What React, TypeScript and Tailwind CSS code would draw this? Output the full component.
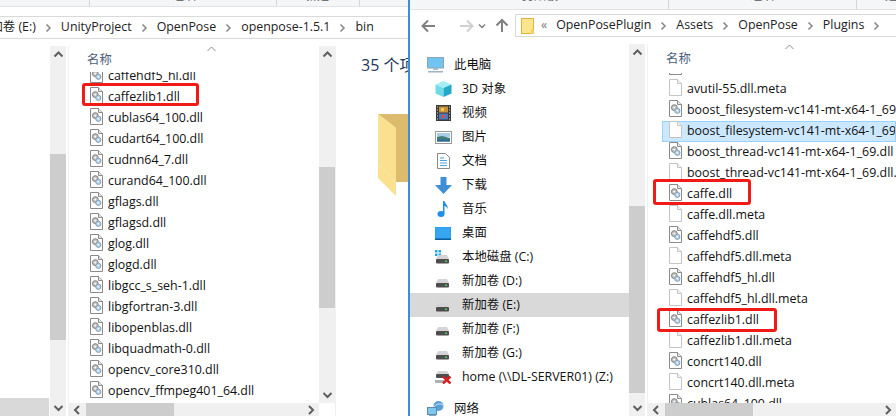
const font = "font-['Open_Sans','Noto_Sans_CJK_SC',sans-serif]";

const leftFiles: [string, boolean][] = [
  ["caffehdf5_hl.dll", true],
  ["caffezlib1.dll", true],
  ["cublas64_100.dll", true],
  ["cudart64_100.dll", true],
  ["cudnn64_7.dll", true],
  ["curand64_100.dll", true],
  ["gflags.dll", true],
  ["gflagsd.dll", true],
  ["glog.dll", true],
  ["glogd.dll", true],
  ["libgcc_s_seh-1.dll", true],
  ["libgfortran-3.dll", true],
  ["libopenblas.dll", true],
  ["libquadmath-0.dll", true],
  ["opencv_core310.dll", true],
  ["opencv_ffmpeg401_64.dll", true],
];

const rightFiles: [string, boolean][] = [
  ["avutil-55.dll", true],
  ["avutil-55.dll.meta", false],
  ["boost_filesystem-vc141-mt-x64-1_69.dll", true],
  ["boost_filesystem-vc141-mt-x64-1_69.dll.meta", false],
  ["boost_thread-vc141-mt-x64-1_69.dll", true],
  ["boost_thread-vc141-mt-x64-1_69.dll.meta", false],
  ["caffe.dll", true],
  ["caffe.dll.meta", false],
  ["caffehdf5.dll", true],
  ["caffehdf5.dll.meta", false],
  ["caffehdf5_hl.dll", true],
  ["caffehdf5_hl.dll.meta", false],
  ["caffezlib1.dll", true],
  ["caffezlib1.dll.meta", false],
  ["concrt140.dll", true],
  ["concrt140.dll.meta", false],
  ["cublas64_100.dll", true],
];

function Chevron({ dir }: { dir: "up" | "down" | "left" | "right" }) {
  const d = {
    up: "M1.5 6.5 L5.5 2.5 L9.5 6.5",
    down: "M1.5 3 L5.5 7 L9.5 3",
    left: "M7 1 L3 5 L7 9",
    right: "M4 1 L8 5 L4 9",
  }[dir];
  return (
    <svg width="11" height="10" viewBox="0 0 11 10" fill="none">
      <path d={d} stroke="#5f5f5f" strokeWidth="2" />
    </svg>
  );
}

function VScroll({ before, thumb, className }: { before: number; thumb: number; className: string }) {
  return (
    <div className={`w-[16px] shrink-0 flex flex-col bg-[#f0f0f0] ${className}`}>
      <div className="h-[17px] shrink-0 flex items-center justify-center">
        <Chevron dir="up" />
      </div>
      <div style={{ height: before }} className="shrink-0" />
      <div style={{ height: thumb }} className="shrink-0 bg-[#cdcdcd]" />
      <div className="flex-1" />
      <div className="h-[17px] shrink-0 flex items-center justify-center">
        <Chevron dir="down" />
      </div>
    </div>
  );
}

function HScroll() {
  return (
    <div className="h-[13px] shrink-0 flex items-center bg-[#f0f0f0]">
      <div className="w-[17px] shrink-0 flex justify-center">
        <Chevron dir="left" />
      </div>
      <div className="w-[88px] h-full shrink-0 bg-[#cdcdcd]" />
      <div className="flex-1" />
      <div className="w-[17px] shrink-0 flex justify-center">
        <Chevron dir="right" />
      </div>
    </div>
  );
}

function DllIcon() {
  return (
    <svg width="13" height="17" viewBox="0 0 13 17" className="shrink-0 -translate-y-[2px]">
      <path d="M0.5 0.5 H8.5 L12.5 4.5 V16.5 H0.5 Z" fill="#fff" stroke="#8a8a8a" />
      <path d="M8.5 0.5 V4.5 H12.5" fill="#e8e8e8" stroke="#8a8a8a" />
      <circle cx="5.3" cy="7.6" r="2.9" fill="#c4c4c4" stroke="#7d7d7d" />
      <circle cx="5.3" cy="7.6" r="0.9" fill="#fff" />
      <circle cx="8.3" cy="10.8" r="2.6" fill="#b9d4ea" stroke="#83a0b8" />
      <circle cx="8.3" cy="10.8" r="0.8" fill="#fff" />
    </svg>
  );
}

function BlankIcon() {
  return (
    <svg width="13" height="17" viewBox="0 0 13 17" className="shrink-0 -translate-y-[2px]">
      <path d="M0.5 0.5 H8.5 L12.5 4.5 V16.5 H0.5 Z" fill="#fff" stroke="#c4c4c4" />
      <path d="M8.5 0.5 V4.5 H12.5" fill="#f4f4f4" stroke="#c4c4c4" />
    </svg>
  );
}

function FileRow({ name, dll, hot }: { name: string; dll: boolean; hot?: boolean }) {
  return (
    <div
      className={`h-[21px] shrink-0 flex items-center gap-[5px] ml-[14px] pl-[7px] whitespace-nowrap ${
        hot ? "bg-[#cce8ff] outline outline-1 -outline-offset-1 outline-[#99d1ff]" : ""
      }`}
    >
      {dll ? <DllIcon /> : <BlankIcon />}
      <span>{name}</span>
    </div>
  );
}

function Sep() {
  return (
    <svg width="7" height="10" viewBox="0 0 7 10" fill="none" className="shrink-0">
      <path d="M1.5 1.5 L5 5 L1.5 8.5" stroke="#8a8a8a" strokeWidth="1.6" />
    </svg>
  );
}

function Monitor() {
  return (
    <svg width="17" height="16" viewBox="0 0 17 16">
      <rect x="0.5" y="0.5" width="16" height="10.5" fill="#6fc4f2" stroke="#8fa3b5" />
      <rect x="6" y="11" width="5" height="2" fill="#a9bccb" />
      <rect x="1" y="14" width="15" height="1.5" fill="#9fb2c2" />
    </svg>
  );
}

function Cube() {
  return (
    <svg width="17" height="16" viewBox="0 0 17 16">
      <path d="M8.5 0 L16.5 3.5 L8.5 7 L0.5 3.5 Z" fill="#a5eef5" />
      <path d="M0.5 3.5 L8.5 7 V16 L0.5 12.5 Z" fill="#6fdbe8" />
      <path d="M16.5 3.5 L8.5 7 V16 L16.5 12.5 Z" fill="#22a9c7" />
    </svg>
  );
}

function Film() {
  return (
    <svg width="15" height="16" viewBox="0 0 15 16" className="ml-[1px]">
      <rect width="15" height="16" fill="#3a3a3a" />
      <rect x="3" y="1.5" width="9" height="6" fill="#c98f3a" />
      <rect x="3" y="8.5" width="9" height="6" fill="#4b78c2" />
      <rect x="5" y="3" width="3" height="3" fill="#e8d04e" />
      <rect x="6" y="10" width="3" height="3" fill="#d2563f" />
      <path d="M1 2h1M1 5h1M1 8h1M1 11h1M1 14h1M13 2h1M13 5h1M13 8h1M13 11h1M13 14h1" stroke="#ddd" />
    </svg>
  );
}

function Picture() {
  return (
    <svg width="17" height="13" viewBox="0 0 17 13">
      <rect x="0.5" y="0.5" width="16" height="12" fill="#fff" stroke="#9a9a9a" />
      <rect x="2" y="2" width="13" height="4" fill="#a8cfe6" />
      <path d="M2 6 L7 5 L15 7 V10.5 H2 Z" fill="#3f7f78" />
      <rect x="2" y="8.5" width="13" height="2" fill="#2f6a9a" />
    </svg>
  );
}

function Doc() {
  return (
    <svg width="13" height="16" viewBox="0 0 13 16" className="ml-[2px]">
      <path d="M0.5 0.5 H8.5 L12.5 4.5 V15.5 H0.5 Z" fill="#fff" stroke="#8a8a8a" />
      <path d="M3 5h4M3 7.5h7M3 10h7M3 12.5h7" stroke="#4aa3dc" />
    </svg>
  );
}

function DownArrow() {
  return (
    <svg width="17" height="17" viewBox="0 0 17 17">
      <path d="M5.5 0 H11.5 V8 H17 L8.5 17 L0 8 H5.5 Z" fill="#3f8fd8" />
    </svg>
  );
}

function Music() {
  return (
    <svg width="12" height="16" viewBox="0 0 12 16" className="ml-[2px]">
      <ellipse cx="4" cy="13" rx="3.5" ry="3" fill="#1f8fe8" />
      <path d="M6 13 V0 H7.5 C8 3 11.5 4 10.5 8 C10 6 8.5 5 7.5 5 V13 Z" fill="#1f8fe8" />
    </svg>
  );
}

function Desktop() {
  return (
    <svg width="16" height="13" viewBox="0 0 16 13">
      <rect width="16" height="13" fill="#1d9af0" />
      <rect x="0.5" y="0.5" width="15" height="10.5" fill="#37a6f2" />
      <rect y="11.5" width="16" height="1.5" fill="#0f5d99" />
    </svg>
  );
}

function Drive({ win }: { win?: boolean }) {
  return (
    <svg width="15" height="14" viewBox="0 0 15 14">
      {win && <path d="M0 0h2.5v2.5H0zM3.5 0H6v2.5H3.5zM0 3.5h2.5V6H0zM3.5 3.5H6V6H3.5z" fill="#1ea7e8" />}
      <path d="M3 5 H12 L14 9 H1 Z" fill="#d4d4d4" />
      <rect x="1" y="9" width="13" height="4.5" rx="1" fill="#4d4d4d" />
      <rect x="10" y="10.5" width="2" height="1.5" fill="#4fd24f" />
    </svg>
  );
}

function NetDrive() {
  return (
    <svg width="17" height="14" viewBox="0 0 17 14">
      <path d="M3 1 H12 L14 4 H1 Z" fill="#d4d4d4" />
      <rect x="1" y="4" width="13" height="4" rx="1" fill="#4d4d4d" />
      <rect x="0" y="10" width="9" height="3" fill="#b0b0b0" />
      <path d="M8 6.5 L15.5 13.5 M15.5 6.5 L8 13.5" stroke="#d81e1e" strokeWidth="2.4" />
    </svg>
  );
}

function Network() {
  return (
    <svg width="17" height="16" viewBox="0 0 17 16">
      <circle cx="11.5" cy="5" r="5" fill="#5a9fd8" />
      <path d="M7 6 C9 3 13 2 16 4" stroke="#cfe6f6" fill="none" />
      <rect x="0.5" y="6.5" width="9" height="7" fill="#7ec8ee" stroke="#5a8db5" />
      <rect x="2" y="14" width="7" height="1.5" fill="#8aa4b8" />
    </svg>
  );
}

const navItems = [
  { icon: <Cube />, label: "3D 对象" },
  { icon: <Film />, label: "视频" },
  { icon: <Picture />, label: "图片" },
  { icon: <Doc />, label: "文档" },
  { icon: <DownArrow />, label: "下载" },
  { icon: <Music />, label: "音乐" },
  { icon: <Desktop />, label: "桌面" },
  { icon: <Drive win />, label: "本地磁盘 (C:)" },
  { icon: <Drive />, label: "新加卷 (D:)" },
  { icon: <Drive />, label: "新加卷 (E:)", selected: true },
  { icon: <Drive />, label: "新加卷 (F:)" },
  { icon: <Drive />, label: "新加卷 (G:)" },
  { icon: <NetDrive />, label: "home (\\\\DL-SERVER01) (Z:)" },
];

function NavRow({ icon, label, selected, indent }: { icon: React.ReactNode; label: string; selected?: boolean; indent?: boolean }) {
  return (
    <div className={`h-[24px] shrink-0 flex items-center whitespace-nowrap ${selected ? "bg-[#d9d9d9]" : ""} ${indent ? "pl-[25px]" : "pl-[17px]"}`}>
      <div className="w-[27px] shrink-0 flex items-center">{icon}</div>
      <span>{label}</span>
    </div>
  );
}

function Header({ chevronLeft, chevronHeight, height }: { chevronLeft: number; chevronHeight: number; height: number }) {
  return (
    <div style={{ height }} className="shrink-0 flex flex-col">
      <div style={{ marginLeft: chevronLeft, height: chevronHeight }} className="flex items-start">
        <svg width="9" height="6" viewBox="0 0 9 6" fill="none">
          <path d="M0.5 5 L4.5 1 L8.5 5" stroke="#8a8a8a" />
        </svg>
      </div>
      <div className="pl-[18px] text-[#4c607a] leading-[16px]">名称</div>
    </div>
  );
}

function Mark({ className }: { className: string }) {
  return <div className={`absolute border-[3px] border-[#f01b14] rounded-[3px] ${className}`} />;
}

export default function App() {
  return (
    <div className={`relative flex w-[896px] h-[416px] overflow-hidden bg-white text-[12.4px] text-[#111] ${font}`}>
      {/* left window */}
      <div className="w-[408px] shrink-0 flex flex-col overflow-hidden">
        <div className="h-[7px] shrink-0 flex items-end bg-[#f5f6f7] border-b border-[#e3e3e3] overflow-hidden text-[#555] text-[12px]">
          <div className="w-[90px] h-full border-r border-[#d5d5d5]" />
          <div className="w-[187px] h-full border-r border-[#d5d5d5] relative">
            <span className="absolute bottom-[2px] left-[82px] leading-[16px]">组织</span>
          </div>
          <div className="w-[83px] h-full border-r border-[#d5d5d5] relative">
            <span className="absolute bottom-[2px] left-[28px] leading-[16px]">新建</span>
          </div>
        </div>
        <div className="h-[9px] shrink-0" />
        <div className="h-[23px] shrink-0 flex items-center gap-[9px] border-y border-[#d9d9d9] whitespace-nowrap -ml-[31px] pl-[9px] text-[12.4px] text-[#222]">
          <span>新加卷 (E:)</span>
          <Sep />
          <span>UnityProject</span>
          <Sep />
          <span>OpenPose</span>
          <Sep />
          <span>openpose-1.5.1</span>
          <Sep />
          <span>bin</span>
        </div>
        <div className="flex-1 flex min-h-0 pt-[7px]">
          <div className="w-[49px] shrink-0 flex flex-col justify-end">
            <div className="h-[18px] bg-[#d9d9d9]" />
          </div>
          <VScroll before={91} thumb={186} className="ml-[1px]" />
          <div className="w-[3px] shrink-0 border-r border-[#f0f0f0]" />
          <div className="w-[250px] shrink-0 flex flex-col min-h-0">
            <Header chevronLeft={138} chevronHeight={6} height={26} />
            <div className="flex-1 min-h-0 overflow-hidden">
              <div className="-mt-[6px]">
                {leftFiles.map(([name, dll]) => (
                  <FileRow key={name} name={name} dll={dll} />
                ))}
              </div>
            </div>
            <HScroll />
          </div>
          <VScroll before={104} thumb={141} className="mb-[13px]" />
          <div className="flex-1 min-w-0 relative border-l border-[#f0f0f0] pl-[25px] pt-[7px] text-[16px] text-[#1e395b] whitespace-nowrap overflow-hidden">
            35 个项目
            <div className="absolute left-[42px] top-[68px]">
              <svg width="40" height="82" viewBox="0 0 40 82">
                <path d="M0 0 H40 V68 H18 V14 Z" fill="#dcbc6c" />
                <path d="M0 0 L18 14 V68 L0 50 Z" fill="#fbe08f" />
                <path d="M0 50 L18 68 V82 L0 64 Z" fill="#fbe08f" />
              </svg>
            </div>
          </div>
        </div>
      </div>

      {/* right window */}
      <div className="flex-1 min-w-0 flex flex-col border-l-2 border-[#3a8fdc] overflow-hidden">
        <div className="h-[10px] shrink-0 flex bg-[#f5f6f7] border-b border-[#e3e3e3] overflow-hidden text-[#555] text-[12px]">
          <div className="w-[259px] h-full border-r border-[#d5d5d5] relative">
            <span className="absolute bottom-[5px] left-[112px] leading-[16px]">剪贴板</span>
          </div>
          <div className="w-[188px] h-full border-r border-[#d5d5d5] relative">
            <span className="absolute bottom-[5px] left-[81px] leading-[16px]">组织</span>
          </div>
          <div className="flex-1 h-full relative">
            <span className="absolute bottom-[5px] left-[28px] leading-[16px]">新建</span>
          </div>
        </div>
        <div className="h-[27px] shrink-0 flex items-end">
          <div className="w-[105px] h-[23px] shrink-0 flex items-center">
            <svg width="105" height="23" viewBox="0 0 105 23" fill="none">
              <path d="M25 12 H13 M18 6.5 L12.5 12 L18 17.5" stroke="#808080" strokeWidth="2" />
              <path d="M50 12 H62 M57 6.5 L62.5 12 L57 17.5" stroke="#d0d0d0" strokeWidth="2" />
              <path d="M69 10.5 L72 13.5 L75 10.5" stroke="#808080" strokeWidth="1.5" />
              <path d="M92 18 V6 M86.5 11.5 L92 6 L97.5 11.5" stroke="#808080" strokeWidth="2" />
            </svg>
          </div>
          <div className="flex-1 h-[23px] flex items-center gap-[9px] border border-r-0 border-[#d9d9d9] pl-[5px] whitespace-nowrap text-[12.4px] text-[#222]">
            <svg width="13" height="16" viewBox="0 0 13 16" className="shrink-0 -mr-[2px]">
              <rect x="0.5" y="0.5" width="12" height="15" fill="#fde48e" stroke="#dcb53f" />
              <rect x="10" y="11" width="3" height="5" fill="#f4cf63" />
            </svg>
            <span className="text-[#777]">«</span>
            <span>OpenPosePlugin</span>
            <Sep />
            <span>Assets</span>
            <Sep />
            <span>OpenPose</span>
            <Sep />
            <span>Plugins</span>
            <Sep />
          </div>
        </div>
        <div className="flex-1 flex min-h-0 pt-[7px]">
          <div className="w-[219px] shrink-0 flex flex-col pt-[9px] overflow-hidden">
            <NavRow icon={<Monitor />} label="此电脑" />
            {navItems.map((n) => (
              <NavRow key={n.label} icon={n.icon} label={n.label} selected={n.selected} indent />
            ))}
            <div className="h-[8px] shrink-0" />
            <NavRow icon={<Network />} label="网络" />
          </div>
          <VScroll before={145} thumb={187} className="" />
          <div className="w-[3px] shrink-0 border-r border-[#f0f0f0]" />
          <div className="flex-1 min-w-0 flex flex-col">
            <Header chevronLeft={137} chevronHeight={7} height={29} />
            <div className="flex-1 min-h-0 overflow-hidden">
              <div className="-mt-[15px]">
                {rightFiles.map(([name, dll], i) => (
                  <FileRow key={name} name={name} dll={dll} hot={i === 3} />
                ))}
              </div>
            </div>
            <HScroll />
          </div>
        </div>
      </div>

      {/* red annotation boxes */}
      <Mark className="left-[82px] top-[83px] w-[117px] h-[23px]" />
      <Mark className="left-[653px] top-[179px] w-[98px] h-[26px]" />
      <Mark className="left-[657px] top-[308px] w-[120px] h-[24px]" />
    </div>
  );
}
